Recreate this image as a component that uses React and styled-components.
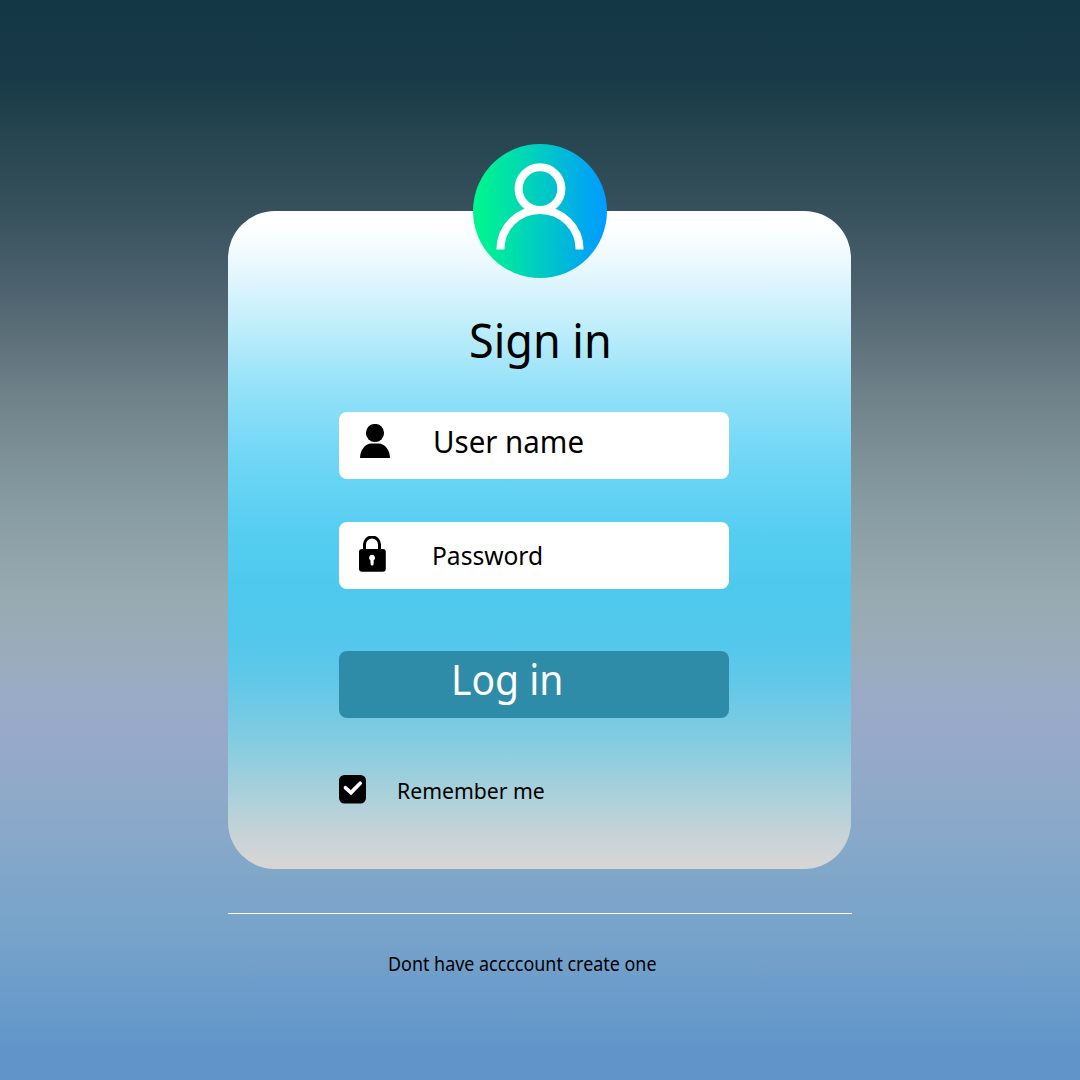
import React from "react";
import styled, { createGlobalStyle } from "styled-components";

const GlobalStyle = createGlobalStyle`
  *, *::before, *::after { box-sizing: border-box; }
  body { margin: 0; font-family: "Noto Sans", "Open Sans", sans-serif; color: #000; }
`;

const Page = styled.main`
  display: flex;
  flex-direction: column;
  width: 1080px;
  height: 1080px;
  padding: 211px 228px 0;
  overflow: hidden;
  background: linear-gradient(
    180deg,
    #143746 0px, #173948 74px, #1f404a 106px, #35505b 205px, #4e636f 292px,
    #6d7f87 388px, #859aa0 495px, #97aab1 595px, #9aacb8 640px, #99abc4 690px,
    #97a9ca 744px, #8ca9c9 810px, #81a7c9 870px, #77a3ca 935px, #6a9bca 1000px,
    #6195c9 1050px, #6094c9 1080px
  );
`;

const Card = styled.form`
  display: flex;
  flex-direction: column;
  width: 623px;
  height: 658px;
  padding: 0 122px 0 111px;
  border-radius: 47px;
  background: linear-gradient(
    180deg,
    #fff 0px, #fcfeff 20px, #e3f6fd 65px, #c3effb 110px, #92e1f8 180px,
    #6fd6f5 250px, #56cef2 320px, #4ec9ee 375px, #51c8ec 425px, #62c8e8 472px,
    #85cce0 532px, #a5d0db 577px, #bfd2d8 612px, #d5d5d5 650px, #d7d6d5 658px
  );
`;

const Avatar = styled.div`
  width: 134px;
  height: 134px;
  margin: -67px 0 0 134px;
  border-radius: 50%;
  background: linear-gradient(90deg, #00f58e 3%, #00dbb0 34%, #00c4cc 58%, #00a8ee 84%, #009dff 99%);
`;

const Icon = styled.svg`
  display: block;
  flex: none;
`;

const Label = styled.span`
  display: block;
  white-space: pre;
  font-size: ${(p) => p.$size}px;
  transform: scaleX(${(p) => p.$stretch || 1});
  transform-origin: left;
`;

const Title = styled.h1`
  margin: 34px 0 0 130px;
  height: 100px;
  font-weight: 400;
  line-height: 56px;
`;

const Field = styled.label`
  display: grid;
  grid-template-columns: ${(p) => p.$column}px 1fr;
  flex: none;
  height: 67px;
  margin-bottom: ${(p) => p.$gap}px;
  padding: ${(p) => p.$top}px 0 0 19px;
  border-radius: 8px;
  background: #fff;
  line-height: ${(p) => p.$line}px;
`;

const LoginButton = styled.button`
  display: flex;
  align-items: flex-start;
  flex: none;
  height: 67px;
  padding: 2px 0 0 112px;
  border: 0;
  border-radius: 8px;
  background: #2e8ca8;
  color: #fff;
  font-family: inherit;
  line-height: 52px;
  text-align: left;
`;

const Remember = styled.label`
  display: flex;
  gap: 31px;
  margin-top: 57px;
  line-height: 32px;
`;

const Divider = styled.hr`
  flex: none;
  width: 624px;
  height: 1px;
  margin: 44px 0 0;
  border: 0;
  background: #fff;
`;

const Footer = styled.p`
  margin: 37px 0 0 160px;
  line-height: 26px;
`;

export default function App() {
  return (
    <>
      <GlobalStyle />
      <Page>
        <Card>
          <Avatar>
            <Icon width="134" height="134" viewBox="0 0 134 134" fill="none" stroke="#fff" strokeWidth="8">
              <circle cx="67" cy="44.7" r="21.4" />
              <path d="M27.4 105.6C27.4 83.5 45 66 67 66S106.600 83.500 106.600 105.600" />
            </Icon>
          </Avatar>
          <Title>
            <Label $size={46.8} $stretch={0.96}>Sign in</Label>
          </Title>
          <Field $top={12} $gap={43} $column={74.5} $line={34}>
            <Icon width="34" height="34" viewBox="0 0 34 34">
              <circle cx="17" cy="9" r="9.1" />
              <path d="M2 34C2 26.500 7 19.600 13.500 19.600H20.500C27 19.600 32 26.500 32 34Z" />
            </Icon>
            <Label $size={31.2} $stretch={0.945}>User name</Label>
          </Field>
          <Field $top={14} $gap={62} $column={73.5} $line={38}>
            <Icon width="30" height="36" viewBox="0 0 30 36">
              <path d="M6.500 15V8.500a7.500 7.500 0 0 1 15 0V15" fill="none" stroke="#000" strokeWidth="3" />
              <rect x="1" y="13" width="26.800" height="22.700" rx="3" />
              <path d="M14 18.800a3 3 0 0 1 1.700 5.500L15.600 28a1.500 1.500 0 0 1-3 0L12.400 24.300A3 3 0 0 1 14 18.800Z" fill="#fff" />
            </Icon>
            <Label $size={26} $stretch={0.945}>Password</Label>
          </Field>
          <LoginButton type="button">
            <Label $size={41.2} $stretch={0.948}>Log in</Label>
          </LoginButton>
          <Remember>
            <Icon width="27" height="29" viewBox="0 0 27 29">
              <rect width="27" height="28.600" rx="5.500" />
              <path d="M6.500 12.800L12 17.600L21.200 8.200" fill="none" stroke="#fff" strokeWidth="3.700" strokeLinecap="round" />
            </Icon>
            <Label $size={22.4} $stretch={0.947}>Remember me</Label>
          </Remember>
        </Card>
        <Divider />
        <Footer>
          <Label $size={19.5} $stretch={0.918}>Dont have accccount create one</Label>
        </Footer>
      </Page>
    </>
  );
}
